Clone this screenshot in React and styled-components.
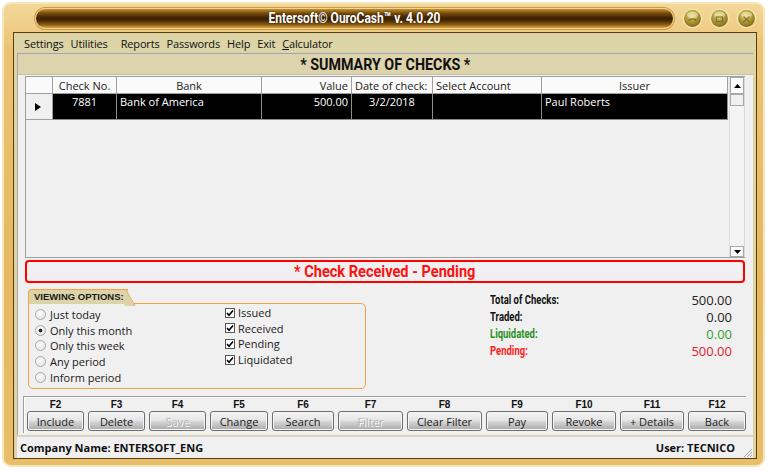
import React from "react";
import styled, { createGlobalStyle, css } from "styled-components";

const GlobalStyle = createGlobalStyle`
  html, body {
    margin: 0;
    padding: 0;
    background: #ffffff;
  }
  body {
    font-family: "Open Sans", "Noto Sans", sans-serif;
    font-size: 11px;
    color: #000;
  }
  * {
    box-sizing: border-box;
  }
`;

const narrow = `"Liberation Sans Narrow", "Roboto", "Liberation Sans", sans-serif`;

// condensed look: no narrow face is installed, so squeeze the glyphs
const Squeeze = styled.span`
  display: inline-block;
  white-space: nowrap;
  transform: scaleX(${(p) => p.$x});
  transform-origin: ${(p) => p.$origin || "center"};
`;

const Window = styled.div`
  margin: 2px 0 0 2px;
  width: 763px;
  height: 465px;
  border-radius: 9px;
  border: 2px solid #f7e6bb;
  background: linear-gradient(180deg, #f3d89a 0%, #ebc373 10%, #e6b961 60%, #e9be6a 100%);
  padding: 0 6px 6px 9px;
  display: flex;
  flex-direction: column;
`;

const TitleArea = styled.div`
  height: 28px;
  display: flex;
  align-items: center;
  padding-left: 22px;
`;

const TitlePill = styled.div`
  width: 640px;
  height: 21px;
  border-radius: 11px;
  border: 1px solid #f1d594;
  box-shadow: 0 0 0 1px #c99a44;
  background: linear-gradient(
    180deg,
    #c7912f 0%,
    #7a4c0c 22%,
    #3a2002 48%,
    #4a2c04 62%,
    #8a5a14 82%,
    #d9a445 100%
  );
  display: flex;
  align-items: center;
  justify-content: center;
  color: #ffffff;
  font-family: ${narrow};
  font-weight: bold;
  font-size: 15px;
  text-shadow: 0 0 2px #2a1600;
`;

const WinButtons = styled.div`
  display: flex;
  gap: 6px;
  margin-left: 8px;
`;

const Inner = styled.div`
  flex: 1;
  border: 1px solid #5c3c0a;
  background: #dcd3a7;
  display: flex;
  flex-direction: column;
  padding: 0 3px;
`;

const MenuBar = styled.div`
  height: 20px;
  display: flex;
  align-items: center;
  padding-left: 7px;
  font-size: 11px;
  letter-spacing: -0.15px;
`;

const MenuItem = styled.span`
  margin-right: ${(p) => (p.$wide ? 13 : 7)}px;
  color: #111;
`;

const Panel = styled.div`
  flex: 1;
  background: #f0f0f0;
  border-top: 1px solid #9aa6b8;
  border-left: 1px solid #a8a8a8;
  display: flex;
  flex-direction: column;
`;

const SummaryHeader = styled.div`
  height: 21px;
  background: #ddd4ae;
  border-bottom: 1px solid #c9c2a2;
  display: flex;
  align-items: center;
  justify-content: center;
  font-family: ${narrow};
  font-weight: bold;
  font-size: 17px;
  color: #111;
`;

const GridWrap = styled.div`
  margin: 1px 8px 0 7px;
  height: 182px;
  display: flex;
  border: 1px solid #a0a0a0;
  border-right: none;
`;

const Table = styled.div`
  flex: 1;
  display: grid;
  grid-template-columns: 27px 64px 145px 90px 81px 109px 186px;
  grid-template-rows: 17px 26px;
  align-content: start;
  font-size: 11px;
`;

const HeadCell = styled.div`
  background: #fafafa;
  border-right: 1px solid #a0a0a0;
  border-bottom: 1px solid #a0a0a0;
  display: flex;
  align-items: center;
  justify-content: ${(p) => p.$align};
  padding: 0 3px;
  color: #222;
  white-space: nowrap;
  overflow: hidden;
`;

const DataCell = styled.div`
  background: #000;
  color: #fff;
  border-right: 1px solid #8c8c8c;
  border-bottom: 1px solid #8c8c8c;
  text-align: ${(p) => p.$align};
  padding: 0 3px;
  white-space: nowrap;
  overflow: hidden;
`;

const RowHeader = styled.div`
  background: #f0f0f0;
  border-right: 1px solid #a0a0a0;
  border-bottom: 1px solid #a0a0a0;
  display: flex;
  align-items: center;
  justify-content: center;
  padding-right: 2px;
`;

const ScrollBar = styled.div`
  width: 16px;
  background: #f4f4f4;
  border-left: 1px solid #e0e0e0;
  border-right: 1px solid #d8d8d8;
  display: flex;
  flex-direction: column;
`;

const ScrollButton = styled.div`
  height: ${(p) => p.$h}px;
  border: 1px solid #a8a8a8;
  background: ${(p) => (p.$thumb ? "#f0f0f0" : "#fcfcfc")};
  display: flex;
  align-items: center;
  justify-content: center;
  ${(p) =>
    p.$bottom &&
    css`
      margin-top: auto;
    `}
`;

const StatusBox = styled.div`
  margin: 2px 8px 0 7px;
  height: 23px;
  border: 2px solid #ff0000;
  border-radius: 4px;
  display: flex;
  align-items: center;
  justify-content: center;
  color: #ff1010;
  font-family: ${narrow};
  font-weight: bold;
  font-size: 16px;
`;

const Lower = styled.div`
  height: 112px;
  display: flex;
`;

const OptionsGroup = styled.div`
  margin: 6px 0 0 10px;
  width: 338px;
  display: flex;
  flex-direction: column;
`;

const GroupTab = styled.div`
  position: relative;
  align-self: flex-start;
  height: 15px;
  padding: 0 4px 0 5px;
  background: #ddd3a9;
  border: 1px solid #f2a144;
  border-right: none;
  border-bottom: none;
  border-radius: 4px 0 0 0;
  font-family: "Liberation Sans", sans-serif;
  font-weight: bold;
  font-size: 9.5px;
  line-height: 14px;
  color: #1a1a1a;
  margin-bottom: -1px;
  z-index: 1;

  &::after {
    content: "";
    position: absolute;
    top: -1px;
    right: -8px;
    width: 10px;
    height: 16px;
    background: #ddd3a9;
    border-top: 1px solid #f2a144;
    border-right: 1px solid #f2a144;
    transform: skewX(30deg);
    transform-origin: bottom left;
    border-radius: 0 2px 0 0;
    z-index: -1;
  }
`;

const GroupBox = styled.div`
  height: 86px;
  border: 1px solid #f2a144;
  border-radius: 0 5px 5px 5px;
  display: flex;
  padding: 1px 0 0 6px;
`;

const OptionColumn = styled.div`
  display: flex;
  flex-direction: column;
  width: ${(p) => p.$w}px;
  padding-top: ${(p) => p.$pt}px;
`;

const OptionRow = styled.label`
  height: ${(p) => p.$h}px;
  display: flex;
  align-items: center;
  gap: ${(p) => p.$gap}px;
  font-size: 11px;
  color: #1a1a1a;
`;

const Radio = styled.span`
  width: 11px;
  height: 11px;
  border-radius: 50%;
  border: 1px solid #a9a9a9;
  background: ${(p) =>
    p.$checked
      ? "radial-gradient(circle, #222 0 1.6px, transparent 2.2px), radial-gradient(circle at 40% 35%, #ffffff, #dcdcdc)"
      : "radial-gradient(circle at 40% 35%, #ffffff, #dcdcdc)"};
`;

const Check = styled.span`
  width: 10px;
  height: 10px;
  border: 1px solid #555;
  background: #fff;
  display: flex;
  align-items: center;
  justify-content: center;
`;

const Totals = styled.div`
  margin: 8px 21px 0 auto;
  width: 242px;
  display: grid;
  grid-template-columns: 1fr auto;
  grid-auto-rows: 17px;
  align-items: center;
`;

const TotalLabel = styled.span`
  font-family: ${narrow};
  font-weight: bold;
  font-size: 12.5px;
  color: ${(p) => p.$color};
`;

const TotalValue = styled.span`
  font-size: 13px;
  text-align: right;
  color: ${(p) => p.$color};
`;

const KeyPanel = styled.div`
  margin: 1px 7px 0 5px;
  height: 37px;
  border-top: 1px solid #a0a0a0;
  border-left: 1px solid #a0a0a0;
  box-shadow: inset 1px 1px 0 #ffffff;
  display: flex;
  gap: 4px;
  padding-left: 3px;
`;

const KeySlot = styled.div`
  width: ${(p) => p.$w}px;
  display: flex;
  flex-direction: column;
  align-items: stretch;
`;

const KeyLabel = styled.div`
  height: 14px;
  display: flex;
  align-items: center;
  justify-content: center;
  font-family: "Liberation Sans", sans-serif;
  font-weight: bold;
  font-size: 10px;
  color: #111;
`;

const KeyButton = styled.button`
  height: 20px;
  margin: 0;
  padding: 0;
  border: 1px solid #6e6e6e;
  border-radius: 3px;
  box-shadow: inset 0 0 0 1px #f6f6f6;
  background: linear-gradient(180deg, #f4f4f4 0%, #e6e6e6 45%, #d4d4d4 55%, #a9a9a9 100%);
  font-family: "Open Sans", "Noto Sans", sans-serif;
  font-size: 11px;
  color: ${(p) => (p.disabled ? "#b4b4b4" : "#222")};
  text-shadow: ${(p) => (p.disabled ? "1px 1px 0 #f8f8f8" : "none")};
  cursor: default;
`;

const StatusBar = styled.div`
  height: 22px;
  margin-top: 1px;
  background: #f0f0f0;
  border-top: 1px solid #d6d6d6;
  display: flex;
  align-items: center;
  padding-left: 3px;
  font-weight: bold;
  font-size: 11px;
  color: #111;
`;

const Spacer = styled.div`
  flex: 1;
`;

const Grip = styled.svg`
  width: 12px;
  height: 12px;
  margin: 8px 0 0 6px;
`;

const columns = [
  { title: "Check No.", head: "center", align: "center", value: "7881" },
  { title: "Bank", head: "center", align: "left", value: "Bank of America" },
  { title: "Value", head: "flex-end", align: "right", value: "500.00" },
  { title: "Date of check:", head: "flex-start", align: "center", value: "3/2/2018" },
  { title: "Select Account", head: "flex-start", align: "left", value: "" },
  { title: "Issuer", head: "center", align: "left", value: "Paul Roberts" },
];

const periods = [
  { label: "Just today" },
  { label: "Only this month", checked: true },
  { label: "Only this week" },
  { label: "Any period" },
  { label: "Inform period" },
];

const statuses = ["Issued", "Received", "Pending", "Liquidated"];

const totals = [
  { label: "Total of Checks:", value: "500.00", color: "#111", valueColor: "#222" },
  { label: "Traded:", value: "0.00", color: "#111", valueColor: "#222" },
  { label: "Liquidated:", value: "0.00", color: "#2b8f25", valueColor: "#3a9c33" },
  { label: "Pending:", value: "500.00", color: "#ff2020", valueColor: "#e0202c" },
];

const keys = [
  { key: "F2", label: "Include", width: 57 },
  { key: "F3", label: "Delete", width: 57 },
  { key: "F4", label: "Save", width: 57, disabled: true },
  { key: "F5", label: "Change", width: 58 },
  { key: "F6", label: "Search", width: 62 },
  { key: "F7", label: "Filter", width: 65, disabled: true },
  { key: "F8", label: "Clear Filter", width: 75 },
  { key: "F9", label: "Pay", width: 62 },
  { key: "F10", label: "Revoke", width: 64 },
  { key: "F11", label: "+ Details", width: 64 },
  { key: "F12", label: "Back", width: 58 },
];

function WinButton({ glyph }) {
  return (
    <svg width="21" height="21" viewBox="0 0 21 21">
      <defs>
        <radialGradient id={`wb-${glyph}`} cx="45%" cy="35%" r="65%">
          <stop offset="0%" stopColor="#e6d78a" />
          <stop offset="55%" stopColor="#b39a36" />
          <stop offset="100%" stopColor="#7d6a1c" />
        </radialGradient>
      </defs>
      <circle cx="10.5" cy="10.5" r="10" fill="#f1e3ac" />
      <circle cx="10.5" cy="10.5" r="8.4" fill={`url(#wb-${glyph})`} />
      <ellipse cx="10.5" cy="6.8" rx="5.6" ry="3.4" fill="#f7efc4" opacity="0.55" />
      {glyph === "min" && (
        <path d="M6.5 12.5 Q10.5 9.5 14.5 12.5" stroke="#6e5c16" strokeWidth="1.6" fill="none" opacity="0.7" />
      )}
      {glyph === "max" && (
        <rect x="7.5" y="9" width="6" height="4.5" stroke="#6e5c16" strokeWidth="1.4" fill="none" opacity="0.7" />
      )}
      {glyph === "close" && (
        <path d="M7.5 8.5 L13.5 14 M13.5 8.5 L7.5 14" stroke="#6e5c16" strokeWidth="1.5" opacity="0.7" />
      )}
    </svg>
  );
}

export default function App() {
  return (
    <>
      <GlobalStyle />
      <Window>
        <TitleArea>
          <TitlePill>
            <Squeeze $x={0.8}>Entersoft© OuroCash™ v. 4.0.20</Squeeze>
          </TitlePill>
          <WinButtons>
            <WinButton glyph="min" />
            <WinButton glyph="max" />
            <WinButton glyph="close" />
          </WinButtons>
        </TitleArea>
        <Inner>
          <MenuBar>
            <MenuItem>Settings</MenuItem>
            <MenuItem $wide>Utilities</MenuItem>
            <MenuItem>Reports</MenuItem>
            <MenuItem>Passwords</MenuItem>
            <MenuItem>Help</MenuItem>
            <MenuItem>Exit</MenuItem>
            <MenuItem>
              <u>C</u>alculator
            </MenuItem>
          </MenuBar>
          <Panel>
            <SummaryHeader>
              <Squeeze $x={0.84}>* SUMMARY OF CHECKS *</Squeeze>
            </SummaryHeader>
            <GridWrap>
              <Table>
                <HeadCell $align="center" />
                {columns.map((c) => (
                  <HeadCell key={c.title} $align={c.head}>
                    {c.title}
                  </HeadCell>
                ))}
                <RowHeader>
                  <svg width="6" height="8" viewBox="0 0 6 8">
                    <path d="M0 0 L6 4 L0 8 Z" fill="#000" />
                  </svg>
                </RowHeader>
                {columns.map((c) => (
                  <DataCell key={c.title} $align={c.align}>
                    {c.value}
                  </DataCell>
                ))}
              </Table>
              <ScrollBar>
                <ScrollButton $h={17}>
                  <svg width="7" height="4" viewBox="0 0 7 4">
                    <path d="M0 4 L3.5 0 L7 4 Z" fill="#000" />
                  </svg>
                </ScrollButton>
                <ScrollButton $h={12} $thumb />
                <ScrollButton $h={11} $bottom>
                  <svg width="7" height="4" viewBox="0 0 7 4">
                    <path d="M0 0 L3.5 4 L7 0 Z" fill="#000" />
                  </svg>
                </ScrollButton>
              </ScrollBar>
            </GridWrap>
            <StatusBox>
              <Squeeze $x={0.91}>* Check Received - Pending</Squeeze>
            </StatusBox>
            <Lower>
              <OptionsGroup>
                <GroupTab>VIEWING OPTIONS:</GroupTab>
                <GroupBox>
                  <OptionColumn $w={190} $pt={2}>
                    {periods.map((p) => (
                      <OptionRow key={p.label} $h={15.6} $gap={4}>
                        <Radio $checked={p.checked} />
                        {p.label}
                      </OptionRow>
                    ))}
                  </OptionColumn>
                  <OptionColumn $w={120} $pt={0}>
                    {statuses.map((s) => (
                      <OptionRow key={s} $h={15.6} $gap={3}>
                        <Check>
                          <svg width="8" height="8" viewBox="0 0 8 8">
                            <path d="M1 4 L3 6.3 L7 1.5" stroke="#000" strokeWidth="1.6" fill="none" />
                          </svg>
                        </Check>
                        {s}
                      </OptionRow>
                    ))}
                  </OptionColumn>
                </GroupBox>
              </OptionsGroup>
              <Totals>
                {totals.map((t) => (
                  <React.Fragment key={t.label}>
                    <TotalLabel $color={t.color}>
                      <Squeeze $x={0.76} $origin="left">
                        {t.label}
                      </Squeeze>
                    </TotalLabel>
                    <TotalValue $color={t.valueColor}>{t.value}</TotalValue>
                  </React.Fragment>
                ))}
              </Totals>
            </Lower>
            <KeyPanel>
              {keys.map((k) => (
                <KeySlot key={k.key} $w={k.width}>
                  <KeyLabel>{k.key}</KeyLabel>
                  <KeyButton disabled={k.disabled}>{k.label}</KeyButton>
                </KeySlot>
              ))}
            </KeyPanel>
          </Panel>
          <StatusBar>
            <span>Company Name: ENTERSOFT_ENG</span>
            <Spacer />
            <span>User: TECNICO</span>
            <Grip viewBox="0 0 12 12">
              <path d="M11 3 L3 11 M11 6 L6 11 M11 9 L9 11" stroke="#a0a0a0" strokeWidth="1" />
            </Grip>
          </StatusBar>
        </Inner>
      </Window>
    </>
  );
}
